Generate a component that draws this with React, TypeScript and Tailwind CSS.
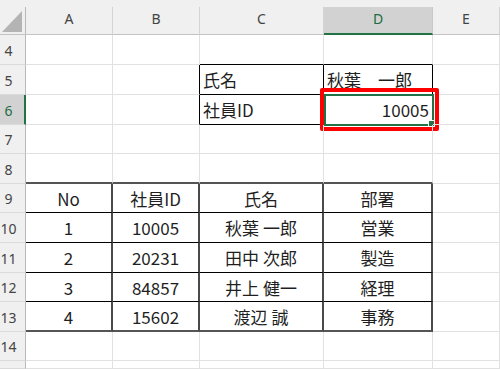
type Edge = "g" | "k" | "K";
type Cell = { t?: string; a?: "l" | "c" | "r"; r?: Edge; b?: Edge; sel?: boolean };

const RIGHT: Record<Edge, string> = {
  g: "border-r border-r-[#e1e1e1]",
  k: "border-r border-r-black",
  K: "border-r-2 border-r-[#4a4a4a]",
};
const BOTTOM: Record<Edge, string> = {
  g: "border-b border-b-[#e1e1e1]",
  k: "border-b border-b-black",
  K: "border-b-2 border-b-[#555555]",
};
const ALIGN = {
  l: "justify-start pl-[3px]",
  c: "justify-center",
  r: "justify-end pr-[3px]",
};

const e: Cell = {};
const tb = (t: string, last = false): Cell => ({ t, a: "c", r: "K", b: last ? "K" : "k" });

// row 15 is cut off by the window, so its number isn't drawn
const rows: { n: string; cells: Cell[]; sel?: boolean }[] = [
  { n: "4", cells: [e, e, { b: "k" }, { b: "k" }, e] },
  {
    n: "5",
    cells: [e, { r: "k" }, { t: "氏名", a: "l", r: "k", b: "k" }, { t: "秋葉　一郎", a: "l", r: "k", b: "k" }, e],
  },
  {
    n: "6",
    sel: true,
    cells: [e, { r: "k" }, { t: "社員ID", a: "l", r: "k", b: "k" }, { t: "10005", a: "r", r: "k", b: "k", sel: true }, e],
  },
  { n: "7", cells: [e, e, e, e, e] },
  { n: "8", cells: [{ b: "K" }, { b: "K" }, { b: "K" }, { b: "K" }, e] },
  { n: "9", cells: [tb("No"), tb("社員ID"), tb("氏名"), tb("部署"), e] },
  { n: "10", cells: [tb("1"), tb("10005"), tb("秋葉 一郎"), tb("営業"), e] },
  { n: "11", cells: [tb("2"), tb("20231"), tb("田中 次郎"), tb("製造"), e] },
  { n: "12", cells: [tb("3"), tb("84857"), tb("井上 健一"), tb("経理"), e] },
  { n: "13", cells: [tb("4", true), tb("15602", true), tb("渡辺 誠", true), tb("事務", true), e] },
  { n: "14", cells: [e, e, e, e, e] },
  { n: "", cells: [e, e, e, e, e] },
];

function DataCell({ c }: { c: Cell }) {
  return (
    <div
      className={`relative flex items-center ${RIGHT[c.r ?? "g"]} ${BOTTOM[c.b ?? "g"]} ${ALIGN[c.a ?? "l"]} whitespace-pre text-[17px] leading-none text-[#1f1f1f] font-['Noto_Sans_CJK_JP',sans-serif]`}
    >
      {c.t}
      {c.sel && (
        <>
          <div className="absolute left-0 top-[-1px] right-[-2px] bottom-[-2px] border-2 border-[#217346]" />
          <div className="absolute right-[-2px] bottom-[-2px] w-[5px] h-[5px] bg-[#217346] outline outline-1 outline-white" />
          <div className="absolute left-[-4px] top-[-7px] right-[-7px] bottom-[-7px] border-4 border-[#ff0000] rounded-[2px]" />
        </>
      )}
    </div>
  );
}

export default function App() {
  const cols = ["A", "B", "C", "D", "E"];
  return (
    <div className="w-[500px] h-[369px] overflow-hidden bg-white grid grid-cols-[26px_87px_87px_124px_109px_67px] grid-rows-[7px_28px_30px_30px_30px_29px_30px_29px_30px_30px_29px_30px_29px_8px] font-['Noto_Sans',sans-serif]">
      {/* top band */}
      <div className="col-span-6 bg-[#f0f0f0]" />

      {/* column headers */}
      <div className="bg-[#f0f0f0] border-r border-r-[#b9b9b9] border-b border-b-[#c4c4c4]">
        <svg width="25" height="27" viewBox="0 0 25 27">
          <polygon points="2,25 22,25 22,4" fill="#b4b4b4" />
        </svg>
      </div>
      {cols.map((c) => (
        <div
          key={c}
          className={
            c === "D"
              ? "flex justify-center pt-[5px] text-[14px] leading-none bg-[#d2d2d2] text-[#1d6b40] border-r border-r-[#c8c8c8] border-b-2 border-b-[#217346]"
              : "flex justify-center pt-[5px] text-[14px] leading-none bg-[#f0f0f0] text-[#444] border-r border-r-[#d4d4d4] border-b border-b-[#c4c4c4]"
          }
        >
          {c}
        </div>
      ))}

      {rows.map((row, ri) => (
        <div key={ri} className="contents">
          <div
            className={
              row.sel
                ? "flex items-center pt-[2px] text-[14px] leading-none bg-[#d2d2d2] text-[#1d6b40] border-r-2 border-r-[#217346] border-b border-b-[#dadada]"
                : "flex items-center pt-[2px] text-[14px] leading-none bg-[#f0f0f0] text-[#444] border-r border-r-[#b9b9b9] border-b border-b-[#dadada]"
            }
          >
            <span className="w-[17px] text-center">{row.n}</span>
          </div>
          {row.cells.map((c, i) => (
            <DataCell key={i} c={c} />
          ))}
        </div>
      ))}
    </div>
  );
}
